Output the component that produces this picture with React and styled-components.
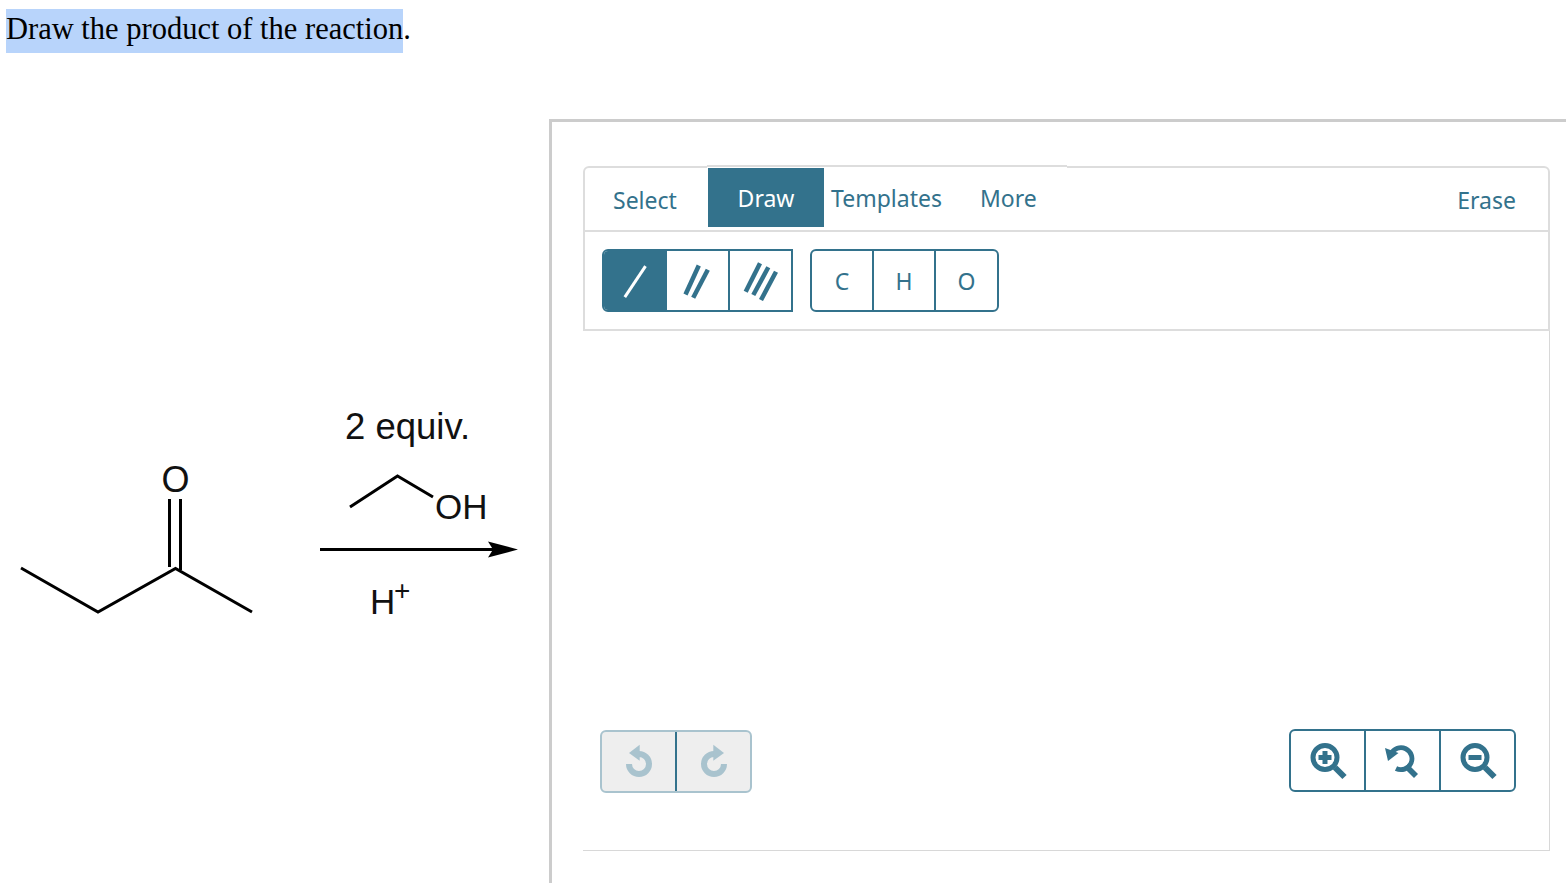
import React from "react";
import styled, { createGlobalStyle } from "styled-components";

const TEAL = "#33728c";
const MUTED = "#a9c3ce";

const GlobalStyle = createGlobalStyle`
  html, body {
    margin: 0;
    padding: 0;
    background: #fff;
    overflow: hidden;
  }
`;

const BOND_LINES = {
  single: { width: 3, lines: [[-10.2, 16.2, 10.5, -14.8]] },
  double: {
    width: 4.5,
    lines: [
      [-12.5, 13.5, 0.8, -15.5],
      [-4.8, 16.8, 9.8, -11.2],
    ],
  },
  triple: {
    width: 4.5,
    lines: [
      [-15.3, 10.7, -1, -17.7],
      [-7.7, 14, 7.3, -13.7],
      [0, 19, 15, -9.3],
    ],
  },
};

const BondIcon = ({ type }) => (
  <svg width="40" height="40" viewBox="-20 -20 40 40">
    {BOND_LINES[type].lines.map((l, i) => (
      <line
        key={i}
        x1={l[0]}
        y1={l[1]}
        x2={l[2]}
        y2={l[3]}
        stroke="currentColor"
        strokeWidth={BOND_LINES[type].width}
      />
    ))}
  </svg>
);

// undo arrow, redo is the same drawing mirrored
const HistoryIcon = ({ mirrored }) => (
  <svg width="40" height="40" viewBox="-20 -20 40 40">
    <g transform={mirrored ? "scale(-1 1) translate(0 2)" : "translate(0 2)"}>
      <path d="M0 -10 A10 10 0 1 1 -10 0" fill="none" stroke="currentColor" strokeWidth="6" />
      <path d="M-10 -11 L0.7 -19.3 V-3.3 Z" fill="currentColor" />
    </g>
  </svg>
);

const MagnifierIcon = ({ plus }) => (
  <svg width="44" height="44" viewBox="-22 -22 44 44" fill="none" stroke="currentColor">
    <g transform="translate(2 0)">
      <circle cx="-5" cy="-3.5" r="12" strokeWidth="5" />
      <path d="M-11.5 -3.5 H1.5" strokeWidth="5" />
      {plus && <path d="M-5 -10 V3" strokeWidth="5" />}
      <path d="M5 6.5 L14.5 16" strokeWidth="6" />
    </g>
  </svg>
);

const ZoomResetIcon = () => (
  <svg width="40" height="40" viewBox="0 0 40 40" fill="none" stroke="currentColor">
    <path d="M13 27.5 A11 11 0 1 0 8 13" strokeWidth="4.8" />
    <path d="M2 7 L15.5 12 L5 20 Z" fill="currentColor" stroke="none" />
    <path d="M23 25 L33 35" strokeWidth="5.6" />
  </svg>
);

const Reaction = () => (
  <ReactionSvg viewBox="0 0 530 230">
    <g fill="none" stroke="#000" strokeWidth="3">
      <path d="M21 168 L98 212 L175.5 168.5 L252 212" />
      <path d="M169.5 99 V167 M180.5 99 V170" />
      <path d="M350 107 L397.5 76 L433 97" />
      <path d="M320 149.5 H495" />
    </g>
    <path d="M488 141.5 L518 149.5 L488 157.5 L493 149.5 Z" fill="#000" />
    <ChemText x="345" y="39" fontSize="36.5">2 equiv.</ChemText>
    <ChemText x="161.5" y="92" fontSize="36">O</ChemText>
    <ChemText x="435" y="119" fontSize="35">OH</ChemText>
    <ChemText x="370" y="214" fontSize="35">H</ChemText>
    <ChemText x="394" y="200" fontSize="28">+</ChemText>
  </ReactionSvg>
);

const App = () => {
  return (
    <Page>
      <GlobalStyle />
      <Title>
        <Highlight>Draw the product of the reaction</Highlight>.
      </Title>
      <Content>
        <ReactionColumn>
          <Reaction />
        </ReactionColumn>
        <Panel>
          <Editor>
            <TabRow>
              <Tab $width={123} $padding={28} $drop={4}>Select</Tab>
              <TabGroup>
                <Tab $active $width={116}>Draw</Tab>
                <Tab $width={149} $padding={7}>Templates</Tab>
                <Tab $width={94} $padding={7}>More</Tab>
              </TabGroup>
              <EraseTab>Erase</EraseTab>
            </TabRow>
            <ToolRow>
              <ButtonGroup $squareRight>
                <ToolCell $active $width={61}><BondIcon type="single" /></ToolCell>
                <ToolCell $width={63}><BondIcon type="double" /></ToolCell>
                <ToolCell $width={63}><BondIcon type="triple" /></ToolCell>
              </ButtonGroup>
              <ButtonGroup>
                <ToolCell $width={60}>C</ToolCell>
                <ToolCell $width={62}>H</ToolCell>
                <ToolCell $width={63}>O</ToolCell>
              </ButtonGroup>
            </ToolRow>
            <Canvas>
              <ButtonGroup $disabled>
                <IconCell $disabled $width={73}><HistoryIcon /></IconCell>
                <IconCell $disabled $width={75}><HistoryIcon mirrored /></IconCell>
              </ButtonGroup>
              <ZoomGroup>
                <IconCell $width={73}><MagnifierIcon plus /></IconCell>
                <IconCell $width={75}><ZoomResetIcon /></IconCell>
                <IconCell $width={75}><MagnifierIcon /></IconCell>
              </ZoomGroup>
            </Canvas>
          </Editor>
        </Panel>
      </Content>
    </Page>
  );
};

export default App;

const Page = styled.div`
  width: 1566px;
  height: 883px;
  display: flex;
  flex-direction: column;
  overflow: hidden;
`;

const Title = styled.div`
  padding: 9px 0 0 6px;
  height: 44px;
  font-family: "Liberation Serif", "Times New Roman", serif;
  font-size: 30.5px;
  line-height: 40px;
  color: #000;
`;

const Highlight = styled.span`
  display: inline-block;
  height: 44px;
  background: #b8d4fb;
`;

const Content = styled.div`
  flex: 1;
  display: flex;
  margin-top: 66px;
  min-height: 0;
`;

const ReactionColumn = styled.div`
  width: 549px;
  flex-shrink: 0;
  padding-top: 281px;
`;

const ReactionSvg = styled.svg`
  display: block;
  width: 530px;
  height: 230px;
`;

const ChemText = styled.text`
  font-family: "Liberation Sans", Arial, sans-serif;
  fill: #111;
`;

const Panel = styled.div`
  flex: 1;
  border-top: 3px solid #ccc;
  border-left: 3px solid #ccc;
  padding: 44px 16px 32px 31px;
  display: flex;
  min-width: 0;
`;

const Editor = styled.div`
  flex: 1;
  display: flex;
  flex-direction: column;
  font-family: "Noto Sans", sans-serif;
  color: ${TEAL};
`;

const TabRow = styled.div`
  height: 62px;
  display: flex;
  align-items: flex-start;
  border: 2px solid #ddd;
  border-radius: 6px 6px 0 0;
`;

const TabGroup = styled.div`
  position: relative;
  display: flex;
  &::before {
    content: "";
    position: absolute;
    left: -1px;
    right: 0;
    top: -3px;
    height: 3px;
    background: linear-gradient(#ddd 2px, #fff 2px);
  }
`;

const Tab = styled.div`
  box-sizing: border-box;
  width: ${(props) => props.$width}px;
  height: 59px;
  padding-left: ${(props) => props.$padding || 0}px;
  padding-top: ${(props) => props.$drop || 0}px;
  display: flex;
  align-items: center;
  justify-content: ${(props) => (props.$active ? "center" : "flex-start")};
  font-size: 23px;
  background: ${(props) => (props.$active ? TEAL : "transparent")};
  color: ${(props) => (props.$active ? "#fff" : TEAL)};
`;

const EraseTab = styled.div`
  margin-left: auto;
  padding-right: 32px;
  height: 63px;
  display: flex;
  align-items: center;
  font-size: 23px;
`;

const ToolRow = styled.div`
  height: 99px;
  box-sizing: border-box;
  padding-top: 17px;
  padding-left: 17px;
  display: flex;
  align-items: flex-start;
  gap: 17px;
  border-left: 2px solid #ddd;
  border-right: 2px solid #ddd;
  border-bottom: 2px solid #ddd;
`;

const ButtonGroup = styled.div`
  display: flex;
  height: 63px;
  box-sizing: border-box;
  border: 2px solid ${(props) => (props.$disabled ? MUTED : TEAL)};
  border-radius: ${(props) => (props.$squareRight ? "6px 0 0 6px" : "6px")};
  overflow: hidden;
  background: ${(props) => (props.$disabled ? "#eee" : "#fff")};
`;

const ToolCell = styled.div`
  box-sizing: border-box;
  width: ${(props) => props.$width}px;
  display: flex;
  align-items: center;
  justify-content: center;
  font-size: 23px;
  background: ${(props) => (props.$active ? TEAL : "transparent")};
  color: ${(props) => (props.$active ? "#fff" : TEAL)};
  & + & {
    border-left: 2px solid ${TEAL};
  }
`;

const Canvas = styled.div`
  flex: 1;
  display: flex;
  justify-content: space-between;
  align-items: flex-end;
  padding: 0 33px 57px 17px;
  border-right: 1px solid #d8d8d8;
  border-bottom: 1px solid #d8d8d8;
`;

const ZoomGroup = styled(ButtonGroup)`
  margin-bottom: 1px;
`;

const IconCell = styled.div`
  box-sizing: border-box;
  width: ${(props) => props.$width}px;
  display: flex;
  align-items: center;
  justify-content: center;
  color: ${(props) => (props.$disabled ? MUTED : TEAL)};
  & + & {
    border-left: 2px solid ${(props) => (props.$disabled ? "#7ea9bb" : TEAL)};
  }
`;
